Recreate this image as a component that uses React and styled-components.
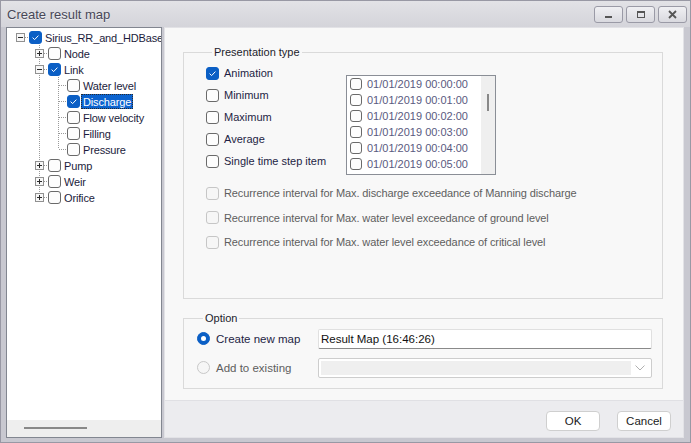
import styled, { createGlobalStyle } from "styled-components";

const GlobalStyle = createGlobalStyle`
  html, body { margin: 0; padding: 0; }
  body {
    font-family: "Liberation Sans", Arial, sans-serif;
    font-size: 11px;
    background: #fff;
  }
  * { box-sizing: border-box; }
`;

const Window = styled.div`
  width: 691px;
  height: 443px;
  display: flex;
  flex-direction: column;
  background: #c8c8d0;
  border: 1px solid #9898a4;
  overflow: hidden;
`;

const TitleBar = styled.div`
  height: 26px;
  flex: none;
  display: flex;
  align-items: center;
  padding: 0 3px 0 6px;
  background: linear-gradient(#e2e2e6, #d4d4da);
`;

const Title = styled.div`
  flex: 1;
  font-size: 13px;
  color: #474757;
  text-shadow: 0 1px 0 rgba(255, 255, 255, 0.6);
`;

const CaptionButtons = styled.div`
  display: flex;
  gap: 3px;
`;

const CaptionButton = styled.div`
  width: 29px;
  height: 17px;
  border: 1px solid #9a9aa6;
  border-radius: 3px;
  background: linear-gradient(#f0f0f3, #d9d9df);
  display: flex;
  align-items: center;
  justify-content: center;
`;

const Body = styled.div`
  flex: 1;
  min-height: 0;
  display: flex;
  gap: 2px;
  padding: 0 6px 4px 5px;
`;

/* ---------- tree ---------- */

const TreePanel = styled.div`
  width: 156px;
  flex: none;
  display: flex;
  flex-direction: column;
  background: #fff;
  border: 1px solid #828690;
`;

const TreeBody = styled.div`
  flex: 1;
  overflow: hidden;
  padding: 1px 0 0 3px;
`;

const TreeRow = styled.div`
  height: 16px;
  display: flex;
  align-items: center;
  white-space: nowrap;
  color: #1c1c3c;
`;

const GutterCell = styled.span`
  flex: none;
  width: 19px;
  height: 16px;
  display: block;
  svg { display: block; }
`;

const NodeLabel = styled.span`
  margin-left: 1px;
  padding: 0 1px;
  line-height: 14px;
  height: 15px;
  letter-spacing: -0.15px;
  border: 1px dotted ${(p) => (p.$selected ? "#2b2b2b" : "transparent")};
  background: ${(p) => (p.$selected ? "#0c63cf" : "transparent")};
  color: ${(p) => (p.$selected ? "#fff" : "inherit")};
`;

const HScroll = styled.div`
  height: 17px;
  flex: none;
  background: #eeeeee;
  padding: 7px 0 0 17px;
`;

const HThumb = styled.div`
  width: 63px;
  height: 2px;
  background: #888;
`;

/* ---------- check / radio ---------- */

const Box = styled.span`
  flex: none;
  width: ${(p) => p.$size}px;
  height: ${(p) => p.$size}px;
  border-radius: 3px;
  border: 1px solid
    ${(p) => (p.$checked ? "#0b5fc5" : p.$disabled ? "#c6c6c6" : "#6a6a6a")};
  background: ${(p) => (p.$checked ? "#0b5fc5" : p.$disabled ? "#f6f6f6" : "#fdfdfd")};
  display: flex;
  align-items: center;
  justify-content: center;
  svg { display: block; }
`;

const Radio = styled.span`
  flex: none;
  width: 13px;
  height: 13px;
  border-radius: 50%;
  background: ${(p) => (p.$checked ? "#0b5fc5" : "#f6f6f6")};
  border: 1px solid ${(p) => (p.$checked ? "#0b5fc5" : "#c8c8c8")};
  display: flex;
  align-items: center;
  justify-content: center;
  &::after {
    content: "";
    display: ${(p) => (p.$checked ? "block" : "none")};
    width: 5px;
    height: 5px;
    border-radius: 50%;
    background: #fff;
  }
`;

/* ---------- right side ---------- */

const RightPanel = styled.div`
  flex: 1;
  display: flex;
  flex-direction: column;
  border: 1px solid #e2e2e6;
  background: #f8f8f8;
`;

const Content = styled.div`
  flex: 1;
  display: flex;
  flex-direction: column;
  gap: 12px;
  padding: 17px 20px 11px 18px;
`;

const Group = styled.fieldset`
  margin: 0;
  min-width: 0;
  border: 1px solid #dadada;
  padding: ${(p) => p.$pad};
  flex: ${(p) => (p.$grow ? 1 : "none")};
`;

const Legend = styled.legend`
  margin-left: 6px;
  padding: 0 2px;
  line-height: 14px;
  color: #1c1c2c;
`;

const PresTop = styled.div`
  display: grid;
  grid-template-columns: 140px 150px;
`;

const OptionList = styled.div`
  display: flex;
  flex-direction: column;
  gap: ${(p) => p.$gap || 0}px;
  margin-top: ${(p) => p.$top || 0}px;
`;

const CheckRow = styled.div`
  height: ${(p) => p.$h}px;
  display: flex;
  align-items: center;
  gap: 5px;
  color: ${(p) => (p.$disabled ? "#5e5e5e" : "#1e1e44")};
  letter-spacing: ${(p) => (p.$disabled ? "-0.1px" : "0")};
  white-space: nowrap;
`;

const ListBox = styled.div`
  margin-top: 13px;
  width: 150px;
  height: 100px;
  border: 1px solid #8a8e96;
  background: #fff;
  display: flex;
`;

const ListItems = styled.div`
  flex: 1;
  overflow: hidden;
  padding-left: 3px;
`;

const ListItem = styled.div`
  height: 16px;
  display: flex;
  align-items: center;
  gap: 5px;
  color: #5a5a80;
  white-space: nowrap;
`;

const VScroll = styled.div`
  width: 14px;
  flex: none;
  background: #efefef;
  padding: 18px 0 0 6px;
`;

const VThumb = styled.div`
  width: 2px;
  height: 17px;
  background: #888;
`;

const OptionRow = styled.div`
  display: grid;
  grid-template-columns: 121px 334px;
  height: 21px;
  align-items: center;
`;

const RadioLabel = styled.div`
  display: flex;
  align-items: center;
  gap: 6px;
  color: ${(p) => (p.$disabled ? "#5e5e5e" : "#1e1e44")};
  font-size: 11.5px;
`;

const TextInput = styled.div`
  height: 20px;
  background: #fff;
  border: 1px solid #e0e0e0;
  border-bottom: 1px solid #8a8a8a;
  border-radius: 2px;
  padding: 0 2px;
  display: flex;
  align-items: center;
  color: #111;
  font-size: 11.5px;
`;

const Combo = styled.div`
  height: 20px;
  background: #fff;
  border: 1px solid #cdcdcd;
  border-radius: 2px;
  padding: 2px;
  display: flex;
  align-items: stretch;
`;

const ComboField = styled.div`
  flex: 1;
  background: #efefef;
`;

const ComboArrow = styled.div`
  width: 18px;
  display: flex;
  align-items: center;
  justify-content: center;
`;

const Footer = styled.div`
  height: 37px;
  flex: none;
  display: flex;
  justify-content: flex-end;
  align-items: flex-start;
  gap: 17px;
  padding: 10px 12px 0 0;
  background: #ececef;
  border-top: 1px solid #e0e0e4;
`;

const Button = styled.div`
  width: 54px;
  height: 20px;
  border: 1px solid #cfcfcf;
  border-radius: 4px;
  background: #fff;
  display: flex;
  align-items: center;
  justify-content: center;
  color: #1a1a1a;
  font-size: 11.5px;
`;

function Tick({ size }) {
  return (
    <svg width={size - 2} height={size - 2} viewBox="0 0 11 11">
      <path d="M2.6 5.6 L4.6 7.6 L8.4 3.6" fill="none" stroke="#fff" strokeWidth="1" />
    </svg>
  );
}

function Check({ size = 13, checked, disabled }) {
  return (
    <Box $size={size} $checked={checked} $disabled={disabled}>
      {checked && <Tick size={size} />}
    </Box>
  );
}

function Gutter({ kind, expander }) {
  const dot = { stroke: "#9a9a9a", strokeWidth: 1, strokeDasharray: "1 1" };
  return (
    <GutterCell>
      <svg width="19" height="16" viewBox="0 0 19 16">
        {(kind === "pipe" || kind === "tee") && <line x1="10.5" y1="0" x2="10.5" y2="16" {...dot} />}
        {kind === "elbow" && <line x1="10.5" y1="0" x2="10.5" y2="8" {...dot} />}
        {kind !== "pipe" && kind !== "blank" && (
          <line x1={expander ? 15 : 11} y1="8.5" x2="19" y2="8.5" {...dot} />
        )}
        {expander && (
          <g>
            <rect x="6.5" y="4.5" width="8" height="8" fill="#f7f7f7" stroke="#919191" />
            <line x1="8" y1="8.5" x2="13" y2="8.5" stroke="#2a2a2a" />
            {expander === "plus" && <line x1="10.5" y1="6" x2="10.5" y2="11" stroke="#2a2a2a" />}
          </g>
        )}
      </svg>
    </GutterCell>
  );
}

const tree = [
  { label: "Sirius_RR_and_HDBaseD", checked: true, cells: [["root", "minus"]] },
  { label: "Node", cells: [["blank"], ["tee", "plus"]] },
  { label: "Link", checked: true, cells: [["blank"], ["tee", "minus"]] },
  { label: "Water level", cells: [["blank"], ["pipe"], ["tee"]] },
  { label: "Discharge", checked: true, selected: true, cells: [["blank"], ["pipe"], ["tee"]] },
  { label: "Flow velocity", cells: [["blank"], ["pipe"], ["tee"]] },
  { label: "Filling", cells: [["blank"], ["pipe"], ["tee"]] },
  { label: "Pressure", cells: [["blank"], ["pipe"], ["elbow"]] },
  { label: "Pump", cells: [["blank"], ["tee", "plus"]] },
  { label: "Weir", cells: [["blank"], ["tee", "plus"]] },
  { label: "Orifice", cells: [["blank"], ["elbow", "plus"]] },
];

const presentation = [
  { label: "Animation", checked: true },
  { label: "Minimum" },
  { label: "Maximum" },
  { label: "Average" },
  { label: "Single time step item" },
];

const steps = ["00:00:00", "00:01:00", "00:02:00", "00:03:00", "00:04:00", "00:05:00"];

const recurrence = [
  "Recurrence interval for Max. discharge exceedance of Manning discharge",
  "Recurrence interval for Max. water level exceedance of ground level",
  "Recurrence interval for Max. water level exceedance of critical level",
];

export default function App() {
  return (
    <>
      <GlobalStyle />
      <Window>
        <TitleBar>
          <Title>Create result map</Title>
          <CaptionButtons>
            <CaptionButton>
              <svg width="9" height="9" viewBox="0 0 9 9">
                <rect x="1" y="6" width="7" height="2" fill="#555" />
              </svg>
            </CaptionButton>
            <CaptionButton>
              <svg width="10" height="9" viewBox="0 0 10 9">
                <rect x="1.5" y="1.5" width="7" height="6" fill="none" stroke="#555" />
                <rect x="1" y="1" width="8" height="2" fill="#555" />
              </svg>
            </CaptionButton>
            <CaptionButton>
              <svg width="9" height="9" viewBox="0 0 9 9">
                <path d="M1 1 L8 8 M8 1 L1 8" stroke="#555" strokeWidth="1.8" />
              </svg>
            </CaptionButton>
          </CaptionButtons>
        </TitleBar>

        <Body>
          <TreePanel>
            <TreeBody>
              {tree.map((n) => (
                <TreeRow key={n.label}>
                  {n.cells.map(([kind, exp], i) => (
                    <Gutter key={i} kind={kind} expander={exp} />
                  ))}
                  <Check checked={n.checked} />
                  <NodeLabel $selected={n.selected}>{n.label}</NodeLabel>
                </TreeRow>
              ))}
            </TreeBody>
            <HScroll>
              <HThumb />
            </HScroll>
          </TreePanel>

          <RightPanel>
            <Content>
              <Group $grow $pad="3px 10px 0 22px">
                <Legend>Presentation type</Legend>
                <PresTop>
                  <OptionList>
                    {presentation.map((p) => (
                      <CheckRow key={p.label} $h={22}>
                        <Check checked={p.checked} />
                        {p.label}
                      </CheckRow>
                    ))}
                  </OptionList>
                  <ListBox>
                    <ListItems>
                      {steps.map((t) => (
                        <ListItem key={t}>
                          <Check size={12} />
                          01/01/2019 {t}
                        </ListItem>
                      ))}
                    </ListItems>
                    <VScroll>
                      <VThumb />
                    </VScroll>
                  </ListBox>
                </PresTop>
                <OptionList $top={6}>
                  {recurrence.map((r) => (
                    <CheckRow key={r} $h={24.5} $disabled>
                      <Check disabled />
                      {r}
                    </CheckRow>
                  ))}
                </OptionList>
              </Group>

              <Group $pad="3px 10px 10px 13px">
                <Legend>Option</Legend>
                <OptionList $gap={8}>
                  <OptionRow>
                    <RadioLabel>
                      <Radio $checked />
                      Create new map
                    </RadioLabel>
                    <TextInput>Result Map (16:46:26)</TextInput>
                  </OptionRow>
                  <OptionRow>
                    <RadioLabel $disabled>
                      <Radio />
                      Add to existing
                    </RadioLabel>
                    <Combo>
                      <ComboField />
                      <ComboArrow>
                        <svg width="10" height="6" viewBox="0 0 10 6">
                          <path d="M0.5 0.5 L5 5 L9.5 0.5" fill="none" stroke="#b0b0b0" />
                        </svg>
                      </ComboArrow>
                    </Combo>
                  </OptionRow>
                </OptionList>
              </Group>
            </Content>
            <Footer>
              <Button>OK</Button>
              <Button>Cancel</Button>
            </Footer>
          </RightPanel>
        </Body>
      </Window>
    </>
  );
}
